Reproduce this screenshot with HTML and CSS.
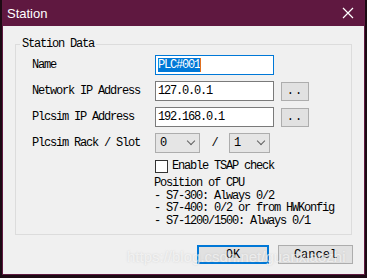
FILE: index.html
```html
<!DOCTYPE html>
<html lang="en">
<head>
    <meta charset="UTF-8">
    <title>Station</title>
    <link rel="stylesheet" href="styles.css">
</head>
<body>
    <div class="window">
        <div class="titlebar">
            <span class="title">Station</span>
            <svg class="close" width="12" height="12" viewBox="0 0 12 12">
                <path d="M1 1 L11 11 M11 1 L1 11" stroke="#fff" stroke-width="1.2"/>
            </svg>
        </div>
        <div class="client">
            <fieldset class="group">
                <legend>Station Data</legend>
                <div class="row first">
                    <span class="label">Name</span>
                    <div class="input focused"><span class="sel">PLC#001</span><span class="caret"></span></div>
                </div>
                <div class="row">
                    <span class="label">Network IP Address</span>
                    <div class="input">127.0.0.1</div>
                    <button class="small">..</button>
                </div>
                <div class="row">
                    <span class="label">Plcsim IP Address</span>
                    <div class="input">192.168.0.1</div>
                    <button class="small">..</button>
                </div>
                <div class="row">
                    <span class="label">Plcsim Rack / Slot</span>
                    <div class="combo rack">0<span class="chev"></span></div>
                    <span class="slash">/</span>
                    <div class="combo slot">1<span class="chev"></span></div>
                </div>
                <div class="check-row">
                    <span class="box"></span>
                    <span>Enable TSAP check</span>
                </div>
                <div class="notes">
                    <div>Position of CPU</div>
                    <div>- S7-300: Always 0/2</div>
                    <div>- S7-400: 0/2 or from HWKonfig</div>
                    <div>- S7-1200/1500: Always 0/1</div>
                </div>
            </fieldset>
            <div class="buttons">
                <button class="btn ok">OK</button>
                <button class="btn">Cancel</button>
            </div>
            <div class="watermark">https://blog.csdn.net/guanxiaozhi</div>
        </div>
    </div>
</body>
</html>
```

FILE: styles.css
```css
body {
    margin: 0;
    background-color: #1c0a13;
    font-family: "Liberation Mono", "DejaVu Sans Mono", monospace;
    font-size: 12px;
    letter-spacing: -1.2px;
    color: #000;
}
.window {
    width: 361px;
    height: 274px;
    margin-left: 2px;
    border: 1px solid #5f1a40;
    border-top: 0;
    background: #f0f0f0;
    display: flex;
    flex-direction: column;
}
.titlebar {
    height: 26px;
    flex: none;
    background: #5f1840;
    color: #fff;
    display: flex;
    align-items: center;
    justify-content: space-between;
    padding: 0 10px 0 4px;
    font-family: "Liberation Sans", Arial, sans-serif;
    font-size: 13px;
    letter-spacing: 0;
}
.close {
    display: block;
}
.client {
    position: relative;
    flex: 1;
}
.group {
    margin: 12px 12px 0 12px;
    padding: 0 0 0 16px;
    height: 197px;
    border: 1px solid #dcdcdc;
    box-sizing: border-box;
    min-width: 0;
}
.group legend {
    margin-left: -12px;
    padding: 0 2px;
    line-height: 12px;
}
.row {
    display: flex;
    align-items: center;
    height: 20px;
    margin-top: 6px;
}
.row.first {
    margin-top: 5px;
}
.label {
    width: 123px;
    flex: none;
}
.input {
    height: 18px;
    border: 1px solid #7a7a7a;
    background: #fff;
    display: flex;
    align-items: center;
    padding-left: 2px;
    width: 115px;
}
.input.focused {
    border-color: #0078d7;
}
.sel {
    background: #0078d7;
    color: #fff;
    line-height: 14px;
}
.caret {
    width: 1px;
    height: 14px;
    background: #e07020;
}
.small {
    margin-left: 7px;
    width: 28px;
    height: 19px;
    border: 1px solid #adadad;
    background: #e1e1e1;
    font: inherit;
    padding: 0;
    letter-spacing: 1px;
}
.combo {
    height: 18px;
    border: 1px solid #adadad;
    background: #e5e5e5;
    display: flex;
    align-items: center;
    justify-content: space-between;
    padding: 0 5px 0 4px;
}
.rack {
    width: 34px;
}
.slot {
    width: 30px;
}
.chev {
    width: 5px;
    height: 5px;
    border-right: 1px solid #606060;
    border-bottom: 1px solid #606060;
    transform: rotate(45deg);
    margin-top: -4px;
}
.slash {
    width: 29px;
    text-align: center;
}
.check-row {
    display: flex;
    align-items: center;
    gap: 4px;
    margin-top: 6px;
    margin-left: 123px;
}
.box {
    width: 11px;
    height: 11px;
    border: 1px solid #333;
    background: #fff;
}
.notes {
    margin-top: 4px;
    margin-left: 122px;
    line-height: 12.5px;
}
.buttons {
    display: flex;
    justify-content: flex-end;
    gap: 9px;
    margin: 10px 11px 0 0;
}
.btn {
    height: 19px;
    width: 75px;
    border: 1px solid #adadad;
    background: #e1e1e1;
    font: inherit;
    padding: 0;
}
.btn.ok {
    width: 72px;
    border: 2px solid #0078d7;
}
.watermark {
    position: absolute;
    left: 124px;
    top: 222px;
    font-family: "Liberation Sans", Arial, sans-serif;
    font-size: 15px;
    letter-spacing: 0;
    color: rgba(255, 255, 255, 0.6);
    text-shadow: 0 0 2px rgba(160, 160, 160, 0.4);
}
```
